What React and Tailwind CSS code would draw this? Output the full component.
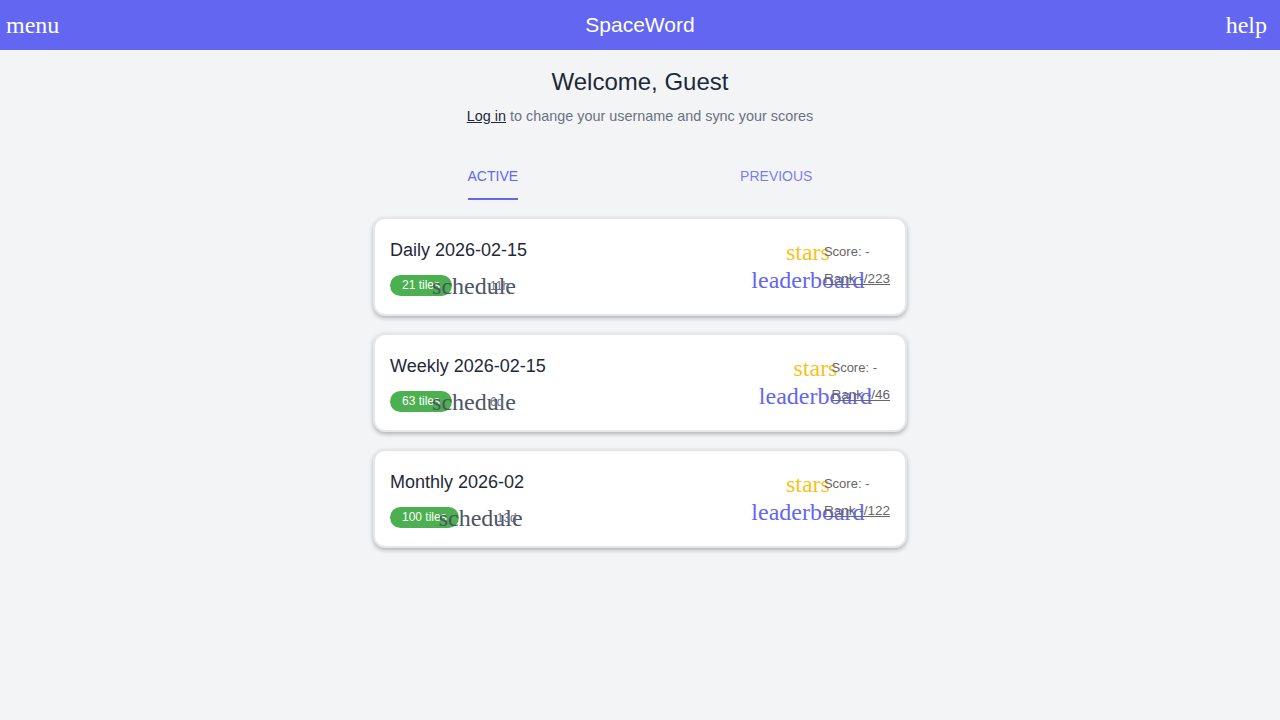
const puzzles = [
  { title: 'Daily 2026-02-15', tiles: '21 tiles', left: '11h', rank: 'Rank -/223' },
  { title: 'Weekly 2026-02-15', tiles: '63 tiles', left: '6d', rank: 'Rank -/46' },
  { title: 'Monthly 2026-02', tiles: '100 tiles', left: '13d', rank: 'Rank -/122' },
]

// icon font never loaded, so the ligature names show as plain serif text
function Icon({ name, className }) {
  return (
    <span className="flex h-4 w-4 shrink-0 items-center justify-center">
      <span className={`whitespace-nowrap font-['Liberation_Serif',serif] text-[24px] leading-none ${className}`}>
        {name}
      </span>
    </span>
  )
}

function PuzzleCard({ p }) {
  return (
    <div className="flex items-center justify-between rounded-xl border-2 border-gray-200 bg-white px-[15px] pt-[17px] pb-[18px] shadow-[0_2px_4px_rgba(0,0,0,0.28)]">
      <div className="flex flex-col">
        <div className="text-[18px] leading-7 text-gray-800">{p.title}</div>
        <div className="mt-[11px] flex items-center">
          <span className="rounded-full bg-[#4caf50] px-3 py-0.5 text-[12px] leading-[17px] text-white">
            {p.tiles}
          </span>
          <div className="ml-[14px] flex items-center gap-2">
            <Icon name="schedule" className="text-gray-600" />
            <span className="text-[12px] text-gray-500">{p.left}</span>
          </div>
        </div>
      </div>
      <div className="mb-px flex flex-col gap-3">
        <div className="flex h-4 items-center gap-2">
          <Icon name="stars" className="text-[#f8c21c]" />
          <span className="text-[13px] text-[#666]">Score: -</span>
        </div>
        <div className="flex h-4 items-center gap-2">
          <Icon name="leaderboard" className="text-[#6366f1]" />
          <a className="text-[13.5px] text-[#666] underline">{p.rank}</a>
        </div>
      </div>
    </div>
  )
}

export default function App() {
  return (
    <div className="min-h-screen bg-gray-100 font-['Liberation_Sans',Arial,sans-serif]">
      {/* top bar */}
      <header className="grid h-[50px] grid-cols-3 items-center bg-[#6366f1] text-white">
        <span className="pl-1.5 font-['Liberation_Serif',serif] text-[24px] leading-none">menu</span>
        <span className="text-center text-[21px]">SpaceWord</span>
        <span className="pr-[13px] text-right font-['Liberation_Serif',serif] text-[24px] leading-none">help</span>
      </header>

      <main className="flex flex-col items-center">
        <h1 className="mt-4 text-2xl text-gray-800">Welcome, Guest</h1>
        <p className="mt-2 text-[14.4px] leading-5 text-gray-500">
          <a className="text-gray-800 underline">Log in</a> to change your username and sync your scores
        </p>

        {/* tabs */}
        <div className="mt-10 flex justify-center gap-[222px] text-sm">
          <span className="border-b-2 border-[#6366f1] pb-3 text-[#6366f1]">ACTIVE</span>
          <span className="pb-3 text-[#6366f1]/85">PREVIOUS</span>
        </div>

        <div className="mt-[17px] flex w-[534px] flex-col gap-[17px]">
          {puzzles.map(p => (
            <PuzzleCard key={p.title} p={p} />
          ))}
        </div>
      </main>
    </div>
  )
}
